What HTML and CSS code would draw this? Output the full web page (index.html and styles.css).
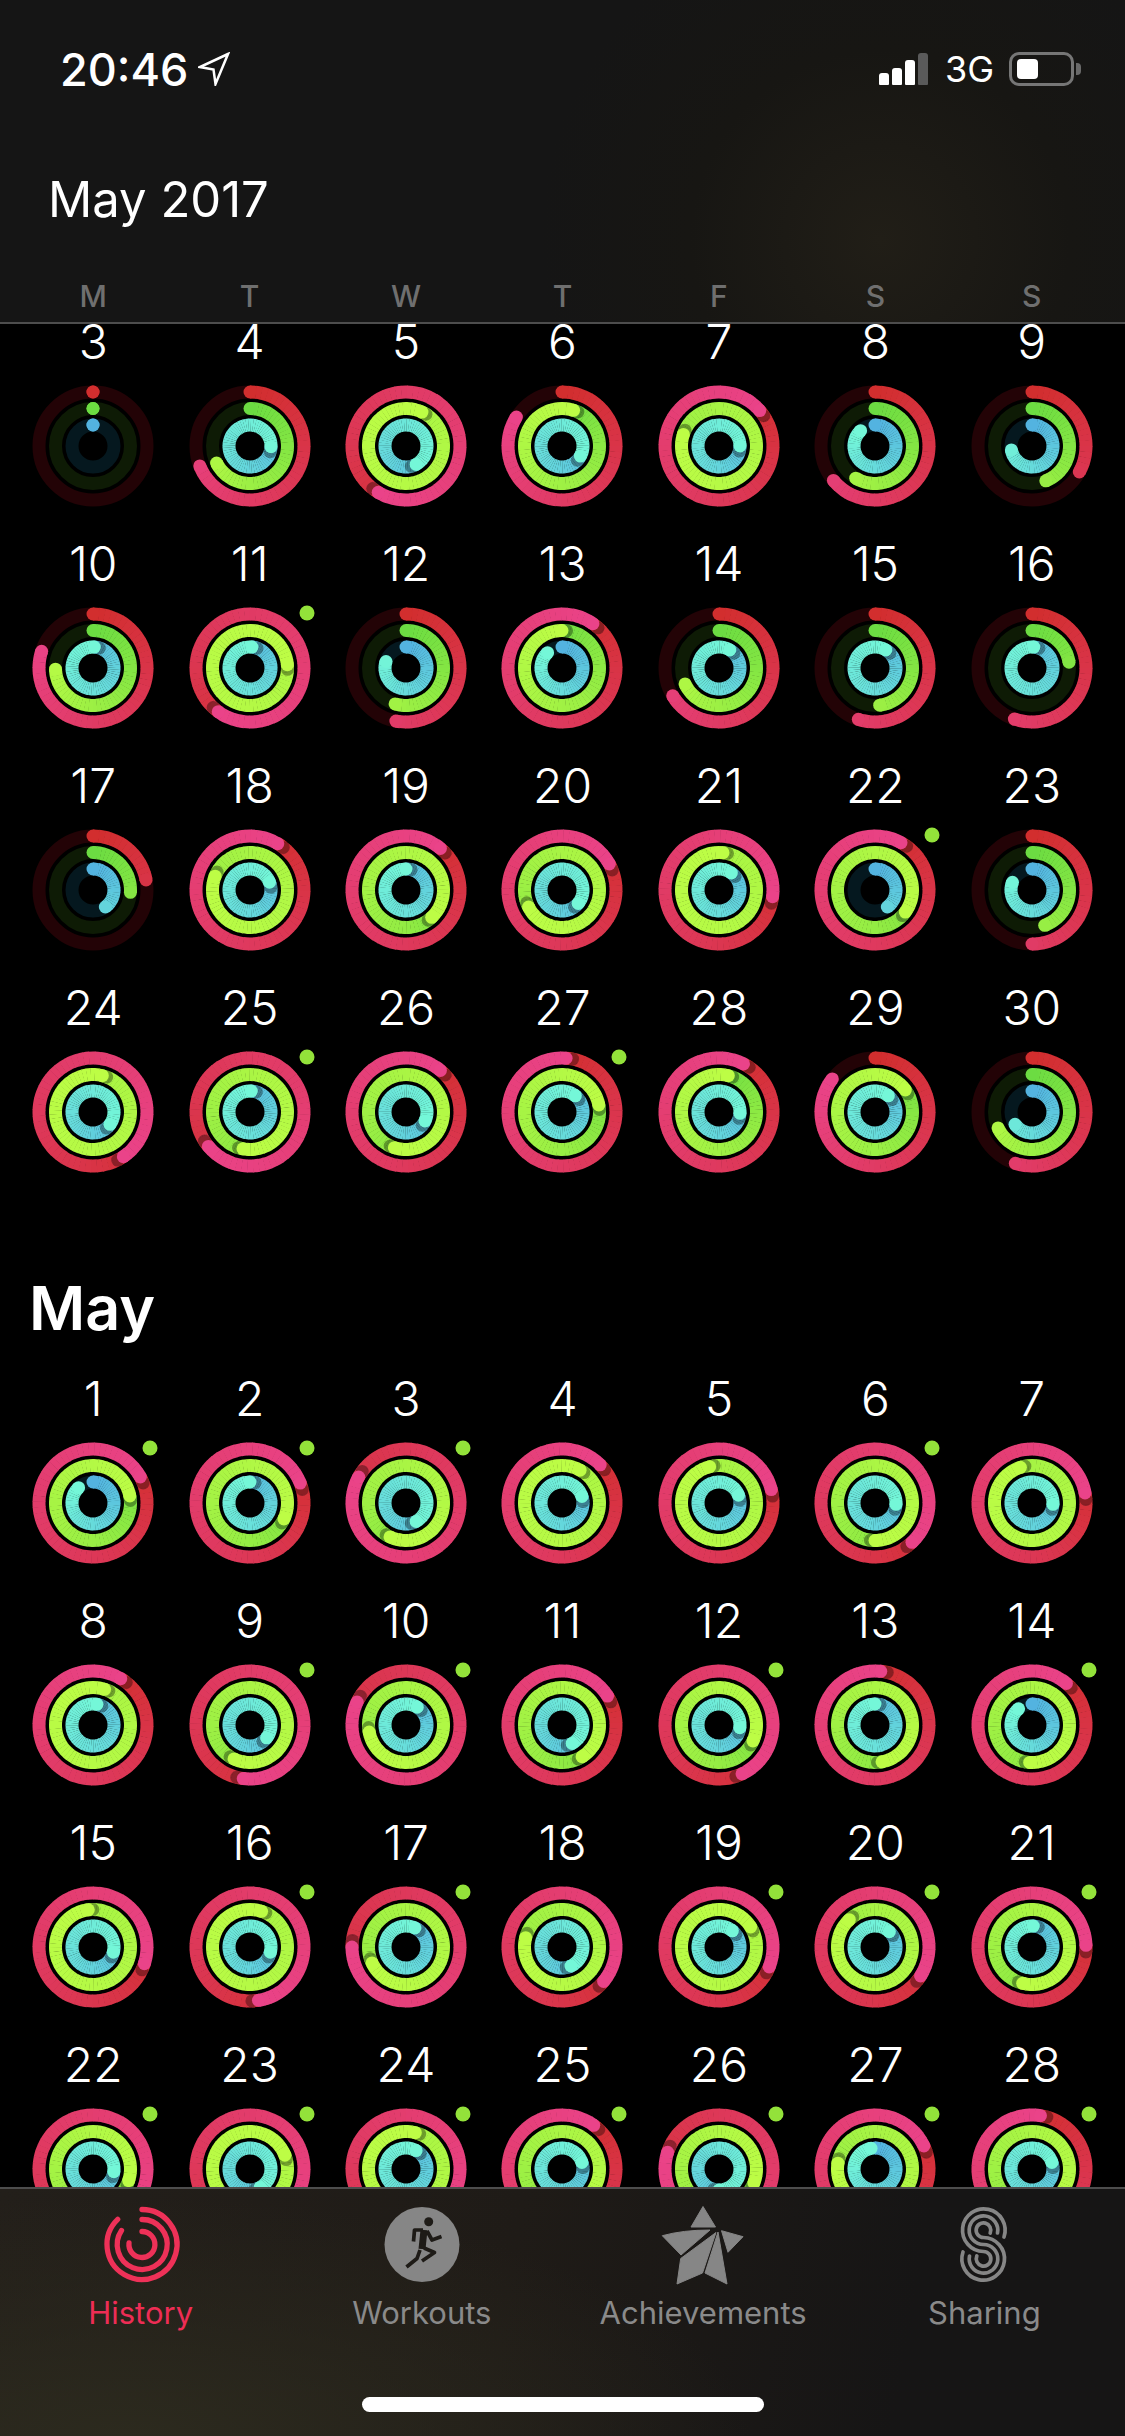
FILE: index.html
```html
<!DOCTYPE html>
<html lang="en">
<head>
	<meta charset="UTF-8">
	<meta name="viewport" content="width=device-width, initial-scale=1.0">
	<title>Activity History</title>
	<link rel="stylesheet" href="styles.css">
</head>
<body>
	<header class="top">
		<div class="status">
			<div class="clock">
				<span>20:46</span>
				<svg class="arrow" width="32" height="34" viewBox="0 0 32 34"><path d="M30 2 2 15 15.500 17.500 17.500 32Z"/></svg>
			</div>
			<div class="signal">
				<div class="bars">
					<i class="b1"></i><i class="b2"></i><i class="b3"></i><i class="b4"></i>
				</div>
				<span>3G</span>
				<div class="battery"><i></i></div>
				<div class="nub"></div>
			</div>
		</div>
		<h1>May 2017</h1>
		<div class="week">
			<span>M</span><span>T</span><span>W</span><span>T</span><span>F</span><span>S</span><span>S</span>
		</div>
	</header>

	<main class="list">
		<div class="days first" id="april"></div>
		<h2>May</h2>
		<div class="days" id="may"></div>
	</main>

	<footer class="tabbar">
		<nav class="tabs">
			<a class="tab on">
				<svg class="icon" viewBox="0 0 100 100">
					<path class="spiral" d="M51 14.500A35 35 0 1 1 26.700 24.300M51 24.500A25 25 0 1 1 30.500 35.500M51 36.500A13 13 0 1 1 38 48"/>
				</svg>
				<span>History</span>
			</a>
			<a class="tab">
				<svg class="icon" viewBox="0 0 100 100">
					<circle class="disc" cx="50" cy="49.500" r="37.500"/>
					<circle class="runner-head" cx="56.700" cy="26.700" r="4.500"/>
					<path class="runner-body" d="M52 35 50 54"/>
					<path class="runner" d="M51 35H42.500L41.500 46.500M55 36 60 45 69.500 41.500M52 53 62.500 57.500 50 66M48 55 45 63.500 34.500 72"/>
				</svg>
				<span>Workouts</span>
			</a>
			<a class="tab">
				<svg class="icon" viewBox="0 0 100 100">
					<path class="star" d="M50 11.500 62.500 32H38ZM9.300 40.700Q30 35 57 35L28 60ZM63 37.500 27.700 63.500 24 89 49.500 78ZM65 37 52 78 74 89ZM68.500 35.700 90 41.700 75 57.300Z"/>
				</svg>
				<span>Achievements</span>
			</a>
			<a class="tab">
				<svg class="icon" viewBox="0 0 100 100">
					<path class="links" d="M70 42A21.300 21.300 0 1 0 49.500 56.500A7.300 7.300 0 1 1 42.800 61"/>
					<path class="links" d="M63.500 38A14.300 14.300 0 1 0 49.500 49.500A14.300 14.300 0 1 1 35.500 61"/>
					<path class="links" d="M56.200 38A7.300 7.300 0 1 0 49.500 42.500A21.300 21.300 0 1 1 29 57"/>
				</svg>
				<span>Sharing</span>
			</a>
		</nav>
		<div class="home"></div>
	</footer>

	<script src="rings.js"></script>
</body>
</html>
```

FILE: styles.css
```css
*{
	margin: 0;
	padding: 0;
	box-sizing: border-box;
	font-family: "Inter", "Liberation Sans", sans-serif;
}
html,body{
	width: 1125px;
	height: 2436px;
	overflow: hidden;
}
body{
	background: #000;
	color: #fff;
	display: flex;
	flex-flow: column;
}

/* header */
.top{
	flex: none;
	height: 324px;
	padding-top: 44px;
	background: radial-gradient(circle at 880px 240px, #211e17 0, #171613 190px, #151515 340px);
	border-bottom: 2px solid #4d4d4d;
}
.status{
	display: flex;
	justify-content: space-between;
	align-items: center;
	height: 50px;
	padding: 0 44px 0 60px;
}
.clock{
	display: flex;
	align-items: center;
	gap: 10px;
	font-size: 45px;
	font-weight: 500;
}
.arrow{
	fill: none;
	stroke: #fff;
	stroke-width: 2.500;
	stroke-linejoin: miter;
}
.signal{
	display: flex;
	align-items: center;
	font-size: 36px;
}
.bars{
	display: flex;
	align-items: flex-end;
	gap: 3px;
	height: 32px;
	margin-right: 17px;
}
.bars i{
	width: 10px;
	background: #fff;
	border-radius: 3px 3px 1px 1px;
}
.bars .b1{ height: 12px; }
.bars .b2{ height: 17px; }
.bars .b3{ height: 25px; }
.bars .b4{ height: 32px; background: #5a5a5a; }
.battery{
	width: 65px;
	height: 34px;
	margin-left: 15px;
	padding: 4px 5px;
	border: 3px solid #767676;
	border-radius: 10px;
}
.battery i{
	display: block;
	width: 21px;
	height: 100%;
	background: #fff;
	border-radius: 4px;
}
.nub{
	width: 5px;
	height: 12px;
	margin-left: 2px;
	background: #6a6a6a;
	border-radius: 0 4px 4px 0;
}
h1{
	margin: 76px 0 48px 48px;
	font-size: 49px;
	font-weight: 400;
	line-height: 60px;
}
.week,.days{
	display: grid;
	grid-template-columns: repeat(7,1fr);
	padding: 0 15px;
}
.week span{
	text-align: center;
	font-size: 30px;
	font-weight: 500;
	line-height: 36px;
	color: #6f6f6f;
}

/* calendar */
.list{
	flex: 1;
	min-height: 0;
	overflow: hidden;
}
.days{
	row-gap: 13px;
}
.first{
	margin-top: -9px;
}
h2{
	height: 182px;
	padding: 82px 0 0 29px;
	font-size: 61px;
	font-weight: 600;
	line-height: 72px;
}
.day{
	display: flex;
	flex-flow: column;
	align-items: center;
}
.num{
	margin: 10px 0 9px;
	font-size: 48px;
	font-weight: 300;
	line-height: 34px;
}
.ring{
	display: block;
	width: 156px;
	height: 156px;
}
.ring path{
	fill: none;
	stroke-width: 13px;
}
.ring .track{
	fill: none;
	stroke-width: 13px;
}
.dot{
	fill: #93e23a;
}
.shade{
	fill: #000;
	opacity: .35;
}

/* tab bar */
.tabbar{
	flex: none;
	height: 249px;
	display: flex;
	flex-flow: column;
	align-items: center;
	background:
		radial-gradient(ellipse 620px 240px at 130px 249px, #2c2a1e 0, rgba(44,42,30,0) 100%),
		linear-gradient(100deg, #231f1a 0, #1f1b17 45%, #161515 80%);
	border-top: 2px solid #4d4d4d;
}
.tabs{
	display: grid;
	grid-template-columns: repeat(4,1fr);
	width: 100%;
	padding-top: 6px;
}
.tab{
	display: flex;
	flex-flow: column;
	align-items: center;
	font-size: 31px;
	line-height: 36px;
	color: #8a8a8a;
}
.tab.on{
	color: #ee2d55;
}
.icon{
	display: block;
	width: 100px;
	height: 100px;
}
.spiral{
	fill: none;
	stroke: #ee3158;
	stroke-width: 5.300;
	stroke-linecap: round;
}
.disc,.star{
	fill: #868686;
}
.star{
	stroke: #868686;
	stroke-width: 1;
	stroke-linejoin: round;
}
.runner-head{
	fill: #1e1b17;
}
.runner,.runner-body{
	fill: none;
	stroke: #1e1b17;
	stroke-linejoin: round;
	stroke-width: 3.700;
}
.runner-body{
	stroke-width: 7;
}
.links{
	fill: none;
	stroke: #868686;
	stroke-width: 3.700;
	stroke-linecap: round;
}
.home{
	width: 402px;
	height: 15px;
	margin-top: 66px;
	background: #fff;
	border-radius: 8px;
}
```

FILE: rings.js
```js
// each day: [move, exercise, stand, standing dot] - ring values, 1 = closed ring
const april = [
	[3,0,0,0],[4,.69,.675,1.255],[5,1.586,2.07,1.42],[6,.84,1.05,1.33],[7,1.136,1.8,1.25],[8,.64,.586,.88],[9,.33,.44,.72],
	[10,.8,.745,1.01],[11,1.6,2.236,1.015,1],[12,.53,.547,.8],[13,1.097,1,.88],[14,.664,.68,1.086],[15,.55,.48,1.086],[16,.553,.225,1.014],
	[17,.22,.26,.4],[18,1.086,1.81,1.19],[19,1.11,1.38,1],[20,1.17,1.675,1.36],[21,1.27,2.017,1.1],[22,1.08,1.35,.4,1],[23,.5,.445,.81],
	[24,1.405,2.04,1.35],[25,1.64,1.53,1.01,1],[26,1.11,1.55,1.32],[27,1.012,1.22,1.11,1],[28,1.075,1.04,1.26],[29,.855,1.15,1.11],[30,.55,.68,.65]
];
const may = [
	[1,1.17,1.22,.88,1],[2,1.19,1.32,1,1],[3,1.83,1.57,1.42,1],[4,1.125,2.08,1.2],[5,1.21,1.96,1.19],[6,1.38,1.5,1.26,1],[7,1.22,1.95,1.26],
	[8,1.086,2.05,1.03],[9,1.52,1.57,1.355,1],[10,1.82,1.72,1.09,1],[11,1.16,1.41,1.42],[12,1.43,1.32,1.27,1],[13,1.017,1.47,1],[14,1.11,1.51,.89,1],
	[15,1.3,1.98,1.29],[16,1.475,2.05,1.29,1],[17,1.75,1.68,1.07,1],[18,1.36,1.79,1.43],[19,1.31,2.16,1.11,1],[20,1.34,1.88,1.12,1],[21,1.245,1.54,1.01,1],
	[22,1.4,1.3,1.27,1],[23,1.45,2.19,1.42,1],[24,1.4,2.04,1.08,1],[25,1.1,1.55,1.2,1],[26,1.8,1.31,1.5,1],[27,1.18,1.775,.97,1],[28,1.025,1.5,1.2,1]
];
// top/rate: how far a lapped ring has already moved to its end colour
const styles = [
	{r:54,from:[210,46,46],to:[234,67,137],track:"#230306",top:.5,rate:.3,ease:.75},
	{r:37.5,from:[108,220,66],to:[189,253,69],track:"#0e1b05",top:.8,rate:.7,ease:.6},
	{r:21,from:[83,179,224],to:[116,247,216],track:"#05181f",top:.5,rate:.3,ease:.55}
];

function point(r,deg) {
	let a=(deg-90)*Math.PI/180;
	return (r*Math.cos(a)).toFixed(2)+" "+(r*Math.sin(a)).toFixed(2);
}
function mix(s,t) {
	t=Math.min(1,t);
	return "rgb("+s.from.map((c,i)=>Math.round(c+(s.to[i]-c)*t)).join(",")+")";
}
function cap(r,deg,color) {
	let p=point(r,deg).split(" ");
	return '<circle cx="'+p[0]+'" cy="'+p[1]+'" r="6.5" fill="'+color+'"/>';
}
function seg(s,a,b,color) {
	return '<path d="M'+point(s.r,a)+"A"+s.r+" "+s.r+" 0 0 1 "+point(s.r,b)+'" stroke="'+color+'"/>';
}
function drawRing(s,val) {
	let out="";
	if(val<1){
		let end=val*360;
		out+='<circle class="track" cx="0" cy="0" r="'+s.r+'" stroke="'+s.track+'"/>';
		for(let a=0;a<end;a+=6) out+=seg(s,a,Math.min(end,a+6.5),mix(s,a/300));
		out+=cap(s.r,0,mix(s,0))+cap(s.r,end,mix(s,end/300));
	}else{
		let tip=(val%1)*360;
		let t0=Math.min(s.top,(val-1)*s.rate);
		for(let a=0;a<360;a+=6) out+=seg(s,tip+a,tip+Math.min(360,a+6.5),mix(s,t0+(1-t0)*Math.pow(a/360,s.ease)));
		let p=point(s.r,tip+(s.r<30?14:7)).split(" ");
		out+='<circle class="shade" cx="'+p[0]+'" cy="'+p[1]+'" r="6.5"/>';
		out+=cap(s.r,tip,mix(s,1));
	}
	return out;
}
function drawDays(id,days) {
	let html="";
	for(let d of days){
		html+='<div class="day"><span class="num">'+d[0]+'</span><svg class="ring" viewBox="-78 -78 156 156">';
		for(let i=0;i<3;i++) html+=drawRing(styles[i],d[i+1]);
		if(d[4]) html+='<circle class="dot" cx="57" cy="-55" r="7.5"/>';
		html+="</svg></div>";
	}
	document.getElementById(id).innerHTML=html;
}
drawDays("april",april);
drawDays("may",may);
```
